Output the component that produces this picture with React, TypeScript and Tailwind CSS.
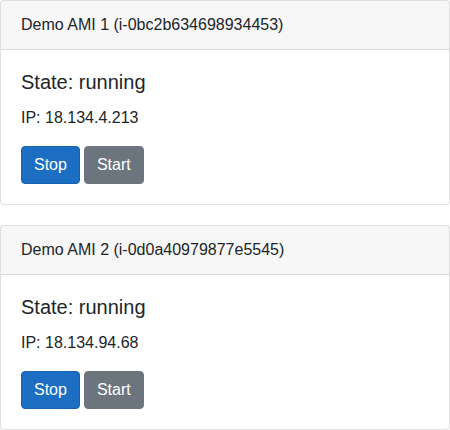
import React from 'react'

interface Instance {
  name: string
  id: string
  state: string
  ip: string
}

const instances: Instance[] = [
  { name: 'Demo AMI 1', id: 'i-0bc2b634698934453', state: 'running', ip: '18.134.4.213' },
  { name: 'Demo AMI 2', id: 'i-0d0a40979877e5545', state: 'running', ip: '18.134.94.68' },
]

function InstanceCard({ instance }: { instance: Instance }) {
  return (
    <div className="rounded border border-[rgba(0,0,0,0.125)] bg-white">
      {/* Header */}
      <div className="px-5 py-3 bg-[rgba(0,0,0,0.03)] border-b border-[rgba(0,0,0,0.125)] text-base leading-6">
        {instance.name} ({instance.id})
      </div>

      {/* Body */}
      <div className="p-5">
        <h5 className="text-[20px] leading-[1.2] mb-3">State: {instance.state}</h5>
        <p className="text-base leading-6 mb-4">IP: {instance.ip}</p>
        <div className="flex gap-1">
          <button className="px-3 py-1.5 text-base leading-6 text-white bg-[#1b6ec2] border border-[#1861ac] rounded">
            Stop
          </button>
          <button className="px-3 py-1.5 text-base leading-6 text-white bg-[#6c757d] border border-[#6c757d] rounded">
            Start
          </button>
        </div>
      </div>
    </div>
  )
}

export default function App() {
  return (
    <div className="w-[450px] flex flex-col gap-5 text-[#212529] font-['Liberation_Sans',Arial,sans-serif]">
      {instances.map((i) => (
        <InstanceCard key={i.id} instance={i} />
      ))}
    </div>
  )
}
